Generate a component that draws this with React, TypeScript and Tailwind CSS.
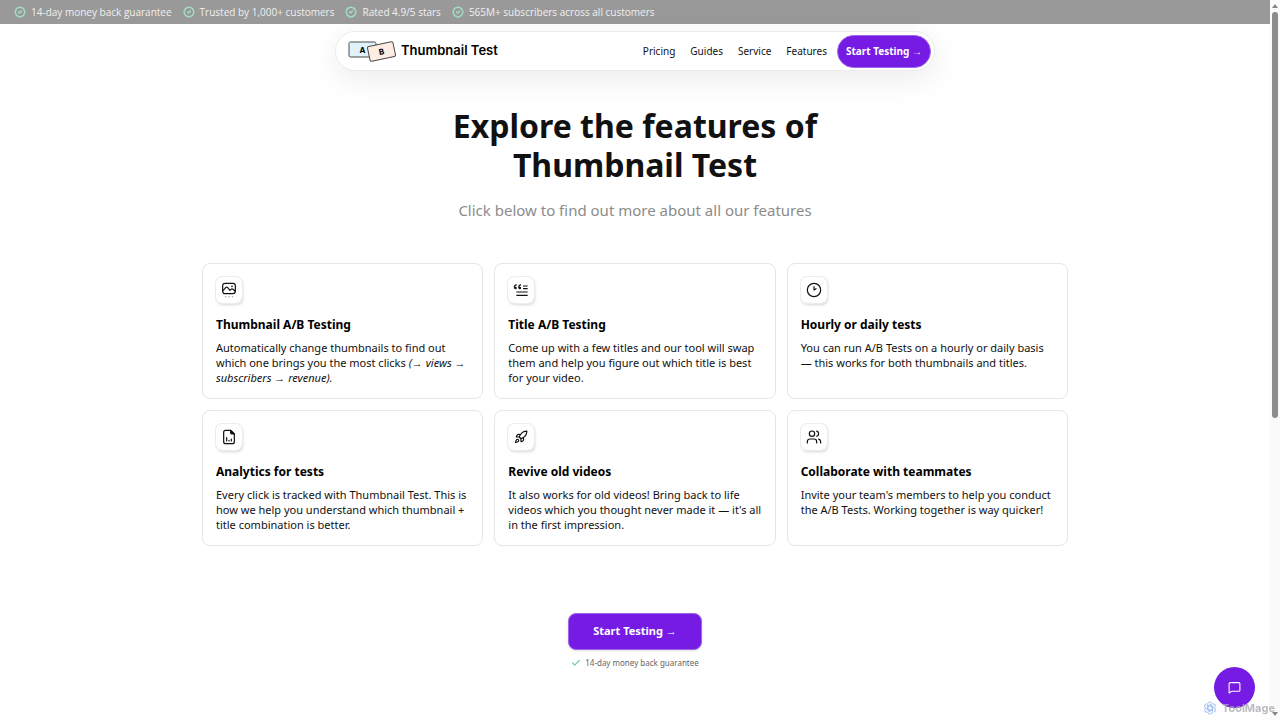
import React from 'react';
import { BadgeCheck, Check, MessageSquare, Rocket, Users } from 'lucide-react';

interface Feature {
  title: string;
  body: React.ReactNode;
  icon: React.ReactNode;
}

const perks = [
  '14-day money back guarantee',
  'Trusted by 1,000+ customers',
  'Rated 4.9/5 stars',
  '565M+ subscribers across all customers',
];

const links = ['Pricing', 'Guides', 'Service', 'Features'];

const Arrow = () => <span className="font-['Liberation_Sans',sans-serif] leading-none font-normal">→</span>;

const ImageIcon = () => (
  <svg className="h-4 w-4" viewBox="0 0 24 24" fill="none" stroke="currentColor" strokeWidth={1.8} strokeLinecap="round" strokeLinejoin="round">
    <rect x="2.5" y="2" width="19" height="15.5" rx="3.5" />
    <path d="M3 13l4-4.500c1-1 2-1 3 0l3.500 4 1.500-1.500c1-1 2-1 3 0l3 2.500" />
    <circle cx="16.500" cy="6.500" r="0.500" />
    <path d="M7 22h.01M12 22h.01M17 22h.01" stroke="#8b8b8b" />
  </svg>
);

const QuoteIcon = () => (
  <svg className="h-4 w-4" viewBox="0 0 24 24" fill="none" stroke="currentColor" strokeWidth={1.8}>
    <path d="M5.500 4C3 4.500 2 6 2 8.500M12 4C9.500 4.500 8.500 6 8.500 8.500" />
    <circle cx="3.700" cy="9" r="2" fill="currentColor" stroke="none" />
    <circle cx="10.200" cy="9" r="2" fill="currentColor" stroke="none" />
    <path d="M15 6h7M15 10h7M5 15h17M5 20h17" />
  </svg>
);

const ClockIcon = () => (
  <svg className="h-4 w-4" viewBox="0 0 24 24" fill="none" stroke="currentColor" strokeWidth={1.8} strokeLinecap="round" strokeLinejoin="round">
    <circle cx="12" cy="12" r="10" />
    <path d="M12 7v5l3-2" />
  </svg>
);

const ReportIcon = () => (
  <svg className="h-4 w-4" viewBox="0 0 24 24" fill="none" stroke="currentColor" strokeWidth={1.8} strokeLinecap="round" strokeLinejoin="round">
    <path d="M14.500 2H7a3 3 0 0 0-3 3v14a3 3 0 0 0 3 3h10a3 3 0 0 0 3-3V7.500z" />
    <path d="M14.500 2v3.500a2 2 0 0 0 2 2H20z" fill="currentColor" />
    <path d="M8.500 13v5M12 17v1M15.500 15v3" />
  </svg>
);

const Logo = () => (
  <svg className="h-6 w-12" viewBox="0 0 48 24" stroke="#4b4b4b">
    <rect x="1" y="3" width="27" height="15" rx="1.500" fill="#e0f3fb" />
    <text x="14.500" y="14" textAnchor="middle" stroke="none" className="fill-black font-['Inter'] text-[8px] font-bold">A</text>
    <g transform="rotate(-12 33.500 12.500)">
      <rect x="20.500" y="5" width="26" height="15" rx="1.500" fill="#fdede3" />
      <text x="33.500" y="15.500" textAnchor="middle" stroke="none" className="fill-black font-['Inter'] text-[8px] font-bold">B</text>
    </g>
  </svg>
);

const SwirlIcon = () => (
  <svg className="h-4 w-4" viewBox="0 0 24 24" fill="none" stroke="#8fb4ef" strokeWidth={1.6}>
    {[0, 60, 120, 180, 240, 300].map((angle) => (
      <path key={angle} d="M12 8.500l4 2.300V17a4.500 4.500 0 0 1-6.500 3.500" transform={`rotate(${angle} 12 12)`} />
    ))}
  </svg>
);

const features: Feature[] = [
  {
    title: 'Thumbnail A/B Testing',
    icon: <ImageIcon />,
    body: (
      <>
        Automatically change thumbnails to find out which one brings you the most clicks{' '}
        <em>
          (<Arrow /> views <Arrow /> subscribers <Arrow /> revenue).
        </em>
      </>
    ),
  },
  {
    title: 'Title A/B Testing',
    icon: <QuoteIcon />,
    body: 'Come up with a few titles and our tool will swap them and help you figure out which title is best for your video.',
  },
  {
    title: 'Hourly or daily tests',
    icon: <ClockIcon />,
    body: 'You can run A/B Tests on a hourly or daily basis — this works for both thumbnails and titles.',
  },
  {
    title: 'Analytics for tests',
    icon: <ReportIcon />,
    body: 'Every click is tracked with Thumbnail Test. This is how we help you understand which thumbnail + title combination is better.',
  },
  {
    title: 'Revive old videos',
    icon: <Rocket size={14} strokeWidth={2} />,
    body: "It also works for old videos! Bring back to life videos which you thought never made it — it's all in the first impression.",
  },
  {
    title: 'Collaborate with teammates',
    icon: <Users size={16} strokeWidth={1.8} />,
    body: "Invite your team's members to help you conduct the A/B Tests. Working together is way quicker!",
  },
];

const App = () => {
  return (
    <div className="flex min-h-screen bg-white font-['Noto_Sans',sans-serif] text-[#111111]">
      <div className="min-w-0 flex-1">
        {/* Perks banner */}
        <div className="flex h-6 items-center gap-[11px] bg-[#999999] px-3.5 font-['Open_Sans',sans-serif] text-[10px] leading-[22px] text-[#f0f0f0]">
          {perks.map((perk) => (
            <span key={perk} className="flex items-center gap-[5px] whitespace-nowrap">
              <BadgeCheck size={12} strokeWidth={2.5} className="text-[#a3e6c6]" />
              {perk}
            </span>
          ))}
        </div>

        {/* Header */}
        <header className="mx-auto mt-[7px] flex h-10 max-w-[600px] items-center justify-between rounded-full border border-[#ececec] bg-white pr-[3px] pl-3 shadow-[0_8px_30px_rgba(0,0,0,0.08)]">
          <a href="#" className="flex items-center gap-[5px]">
            <Logo />
            <span className="font-['Inter',sans-serif] text-[13px] font-semibold text-black">Thumbnail Test</span>
          </a>
          <nav className="flex items-center gap-[15px] text-[10px]">
            {links.map((link) => (
              <a key={link} href="#">{link}</a>
            ))}
            <button className="-ml-[5px] h-[33px] rounded-full border border-[#9c66e8] bg-[#751be3] px-2 text-[10px] font-bold whitespace-nowrap text-white">
              Start Testing <Arrow />
            </button>
          </nav>
        </header>

        <main className="flex flex-col items-center">
          <h1 className="mt-[35px] max-w-[420px] text-center text-[32px] leading-[39px] font-bold">
            Explore the features of Thumbnail Test
          </h1>
          <p className="mt-[14px] text-[15px] leading-6 text-[#8c8c8c]">Click below to find out more about all our features</p>

          {/* Feature cards */}
          <section className="mt-[41px] grid w-full max-w-[866px] grid-cols-3 gap-[11px]">
            {features.map((feature) => (
              <article key={feature.title} className="rounded-lg border border-[#e6e6e6] p-[13px]">
                <div className="flex h-[26px] w-[26px] items-center justify-center rounded-md shadow-[0_0_0_1px_#ececec,1px_2px_3px_rgba(0,0,0,0.16)]">
                  {feature.icon}
                </div>
                <h2 className="mt-[13px] text-[12px] leading-[18px] font-bold text-black">{feature.title}</h2>
                <p className="mt-1.5 text-[11px] leading-[15px]">{feature.body}</p>
              </article>
            ))}
          </section>

          <button className="mt-[67px] h-[37px] w-[134px] rounded-lg border border-[#9c66e8] bg-[#751be3] text-[11px] font-bold text-white shadow-sm">
            Start Testing <Arrow />
          </button>
          <p className="mt-[7px] flex items-center gap-1 text-[8px] leading-3 text-[#666666]">
            <Check size={10} strokeWidth={3} className="text-[#7cc9a4]" />
            14-day money back guarantee
          </p>
        </main>
      </div>

      {/* Scrollbar track */}
      <div className="sticky top-0 flex h-screen w-[10px] flex-col items-center justify-between bg-[#fafafa] py-1">
        <svg className="h-1 w-1.5" viewBox="0 0 6 4"><path d="M0 4L3 0l3 4z" fill="#858585" /></svg>
        <div className="mt-1 h-[57%] w-1.5 rounded-full bg-[#8c8c8c]" />
        <div className="flex-1" />
        <svg className="h-1 w-1.5" viewBox="0 0 6 4"><path d="M0 0l3 4 3-4z" fill="#858585" /></svg>
      </div>

      <button aria-label="Open chat" className="fixed right-[25px] bottom-[12px] flex h-[41px] w-[41px] items-center justify-center rounded-full bg-[#751be3] text-white">
        <MessageSquare size={13} />
      </button>
      <div className="fixed right-[5px] bottom-[4px] flex items-center gap-1 opacity-80">
        <SwirlIcon />
        <span className="font-['Inter',sans-serif] text-[11px] font-bold text-[#a9a9b0]">ToolMage</span>
      </div>
    </div>
  );
};

export default App;
